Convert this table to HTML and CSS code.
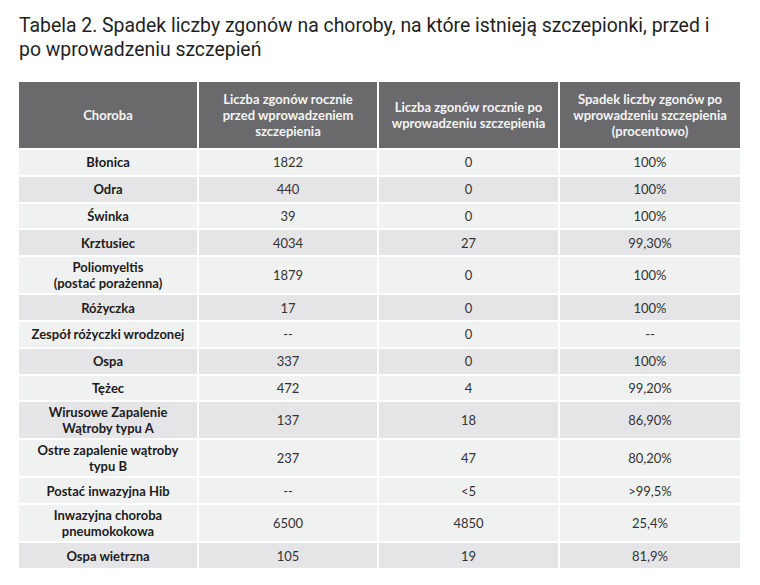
FILE: index.html
```html
<!DOCTYPE html>
<html lang="pl">
<head>
<meta charset="utf-8">
<title>Tabela 2</title>
<link rel="stylesheet" href="styles.css">
</head>
<body>
<div class="page">
  <h1 class="title">Tabela 2. Spadek liczby zgonów na choroby, na które istnieją szczepionki, przed i<br>po wprowadzeniu szczepień</h1>
  <table class="deaths">
    <colgroup>
      <col class="c1"><col class="c2"><col class="c3"><col class="c4">
    </colgroup>
    <thead>
      <tr>
        <th>Choroba</th>
        <th>Liczba zgonów rocznie przed wprowadzeniem szczepienia</th>
        <th>Liczba zgonów rocznie po wprowadzeniu szczepienia</th>
        <th>Spadek liczby zgonów po wprowadzeniu szczepienia (procentowo)</th>
      </tr>
    </thead>
    <tbody>
      <tr class="light"><td>Błonica</td><td>1822</td><td>0</td><td>100%</td></tr>
      <tr class="dark"><td>Odra</td><td>440</td><td>0</td><td>100%</td></tr>
      <tr class="light"><td>Świnka</td><td>39</td><td>0</td><td>100%</td></tr>
      <tr class="dark"><td>Krztusiec</td><td>4034</td><td>27</td><td>99,30%</td></tr>
      <tr class="light"><td>Poliomyeltis<br>(postać porażenna)</td><td>1879</td><td>0</td><td>100%</td></tr>
      <tr class="dark"><td>Różyczka</td><td>17</td><td>0</td><td>100%</td></tr>
      <tr class="light"><td>Zespół różyczki wrodzonej</td><td>--</td><td>0</td><td>--</td></tr>
      <tr class="dark"><td>Ospa</td><td>337</td><td>0</td><td>100%</td></tr>
      <tr class="light"><td>Tężec</td><td>472</td><td>4</td><td>99,20%</td></tr>
      <tr class="dark"><td>Wirusowe Zapalenie<br>Wątroby typu A</td><td>137</td><td>18</td><td>86,90%</td></tr>
      <tr class="light"><td>Ostre zapalenie wątroby<br>typu B</td><td>237</td><td>47</td><td>80,20%</td></tr>
      <tr class="light"><td>Postać inwazyjna Hib</td><td>--</td><td>&lt;5</td><td>&gt;99,5%</td></tr>
      <tr class="light"><td>Inwazyjna choroba<br>pneumokokowa</td><td>6500</td><td>4850</td><td>25,4%</td></tr>
      <tr class="dark"><td>Ospa wietrzna</td><td>105</td><td>19</td><td>81,9%</td></tr>
    </tbody>
  </table>
</div>
</body>
</html>
```
FILE: styles.css
```css
html, body {
  margin: 0;
  padding: 0;
  background: #ffffff;
}

.page {
  padding: 14px 0 0 19px;
}

.title {
  margin: 0;
  width: 730px;
  font-family: Roboto, "Liberation Sans", sans-serif;
  font-weight: 400;
  font-size: 19.4px;
  line-height: 24px;
  color: #1f1f1f;
}

.deaths {
  margin-top: 20px;
  width: 721px;
  table-layout: fixed;
  border-collapse: separate;
  border-spacing: 0;
  font-family: Lato, "Noto Sans", sans-serif;
  font-size: 13px;
  line-height: 16px;
  text-align: center;
}

.c1 { width: 180px; }
.c2 { width: 180px; }
.c3 { width: 181px; }
.c4 { width: 180px; }

.deaths th,
.deaths td {
  border-right: 2px solid #ffffff;
  border-bottom: 2px solid #ffffff;
  vertical-align: middle;
}

.deaths th:last-child,
.deaths td:last-child {
  border-right: 0;
}

.deaths thead tr {
  height: 68px;
}

.deaths th {
  background: #6a6a6d;
  color: #f4f4f4;
  font-weight: 700;
  padding: 8px 10px;
}

.deaths tbody tr {
  height: 26.8px;
}

.deaths td {
  padding: 2px 6px;
  color: #333333;
  font-weight: 400;
}

.deaths td:first-child {
  font-weight: 700;
  color: #1c1c1c;
}

.deaths tr.light td {
  background: #f0f1f1;
}

.deaths tr.dark td {
  background: #e5e5e7;
}
```
